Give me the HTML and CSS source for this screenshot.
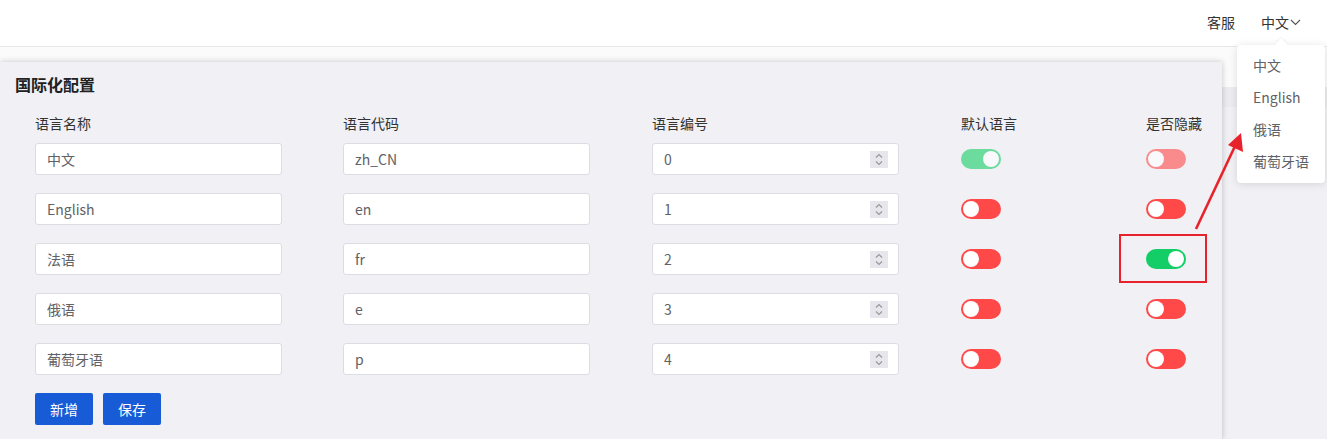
FILE: index.html
```html
<!DOCTYPE html>
<html lang="zh-CN">

<head>
    <meta charset="UTF-8">
    <meta name="viewport" content="width=device-width, initial-scale=1.0">
    <title>国际化配置</title>
    <link rel="stylesheet" href="styles.css">
</head>

<body>
    <div class="header">
        <span class="header_item">客服</span>
        <span class="header_item lang">中文
            <svg class="chevron" width="11" height="7" viewBox="0 0 11 7">
                <path d="M1 1 L5.5 5.5 L10 1" fill="none" stroke="#555" stroke-width="1.1" />
            </svg>
        </span>
    </div>

    <div class="main">
        <div class="panel">
            <div class="panel_title">国际化配置</div>
            <div class="grid grid_head">
                <div>语言名称</div>
                <div>语言代码</div>
                <div>语言编号</div>
                <div>默认语言</div>
                <div>是否隐藏</div>
            </div>
            <div class="grid">
                <div class="input"><input value="中文"></div>
                <div class="input"><input value="zh_CN"></div>
                <div class="input"><input value="0"><span class="spin"></span></div>
                <div class="cell"><span class="switch on disabled"></span></div>
                <div class="cell"><span class="switch disabled"></span></div>

                <div class="input"><input value="English"></div>
                <div class="input"><input value="en"></div>
                <div class="input"><input value="1"><span class="spin"></span></div>
                <div class="cell"><span class="switch"></span></div>
                <div class="cell"><span class="switch"></span></div>

                <div class="input"><input value="法语"></div>
                <div class="input"><input value="fr"></div>
                <div class="input"><input value="2"><span class="spin"></span></div>
                <div class="cell"><span class="switch"></span></div>
                <div class="cell"><span class="switch on"></span></div>

                <div class="input"><input value="俄语"></div>
                <div class="input"><input value="e"></div>
                <div class="input"><input value="3"><span class="spin"></span></div>
                <div class="cell"><span class="switch"></span></div>
                <div class="cell"><span class="switch"></span></div>

                <div class="input"><input value="葡萄牙语"></div>
                <div class="input"><input value="p"></div>
                <div class="input"><input value="4"><span class="spin"></span></div>
                <div class="cell"><span class="switch"></span></div>
                <div class="cell"><span class="switch"></span></div>
            </div>
            <div class="btns">
                <button class="btn">新增</button>
                <button class="btn">保存</button>
            </div>
        </div>
    </div>

    <ul class="dropdown">
        <li>中文</li>
        <li>English</li>
        <li>俄语</li>
        <li>葡萄牙语</li>
    </ul>

    <svg class="mark" width="1327" height="439" viewBox="0 0 1327 439">
        <rect x="1120" y="235" width="86" height="47" fill="none" stroke="#e8222b" stroke-width="2" />
        <line x1="1196" y1="229" x2="1236" y2="144" stroke="#e8222b" stroke-width="2.6" />
        <polygon points="1241,133 1243,152 1228,145" fill="#e8222b" />
    </svg>
</body>

</html>
```

FILE: styles.css
```css
* {
    padding: 0;
    margin: 0;
    box-sizing: border-box;
}

ul,
li {
    list-style: none;
}

body {
    width: 1327px;
    height: 439px;
    overflow: hidden;
    position: relative;
    font-family: "Noto Sans CJK SC", "Microsoft YaHei", sans-serif;
    font-size: 14px;
    color: #333;
    background: #f0f0f5;
}

.header {
    height: 47px;
    background: #fff;
    border-bottom: 1px solid #e8e8ec;
    display: flex;
    justify-content: flex-end;
    align-items: center;
    padding: 0 26px 2px 0;
    gap: 26px;
}

.header_item {
    line-height: 20px;
    color: #333;
    display: flex;
    align-items: center;
}

.chevron {
    margin-left: 1px;
    margin-top: 1px;
}

.main {
    padding-top: 15px;
    height: 392px;
    background: linear-gradient(to bottom, #fbfbfc 0, #fbfbfc 40px, #ebebf0 40px, #ebebf0 60px, #f0f0f5 60px);
}

.panel {
    width: 1222px;
    height: 100%;
    background: #f0f0f5;
    box-shadow: 0 0 6px rgba(0, 0, 0, 0.22);
    padding: 11px 0 0 15px;
}

.panel_title {
    font-size: 16px;
    font-weight: bold;
    line-height: 22px;
    color: #222;
}

.grid {
    display: grid;
    grid-template-columns: 308px 309px 309px 185px 1fr;
    row-gap: 18px;
    padding-left: 20px;
}

.grid_head {
    margin-top: 18px;
    margin-bottom: 10px;
    line-height: 20px;
    color: #333;
}

.input {
    width: 247px;
    height: 32px;
    background: #fff;
    border: 1px solid #dcdce4;
    border-radius: 3px;
    display: flex;
    align-items: center;
    padding: 0 10px 0 11px;
}

.input input {
    flex: 1;
    min-width: 0;
    border: none;
    outline: none;
    background: transparent;
    font-family: inherit;
    font-size: 14px;
    color: #606266;
}

.spin {
    width: 18px;
    height: 17px;
    background: #e6e6ec url("data:image/svg+xml,%3Csvg xmlns='http://www.w3.org/2000/svg' width='18' height='17'%3E%3Cpath d='M6 6.5 L9 3.5 L12 6.5 M6 10.5 L9 13.5 L12 10.5' fill='none' stroke='%23999' stroke-width='1.2'/%3E%3C/svg%3E") no-repeat center;
}

.cell {
    height: 32px;
    display: flex;
    align-items: center;
}

.switch {
    width: 40px;
    height: 20px;
    border-radius: 10px;
    background: #ff4949;
    position: relative;
    display: block;
}

.switch:after {
    content: '';
    position: absolute;
    top: 2px;
    left: 2px;
    width: 16px;
    height: 16px;
    border-radius: 50%;
    background: #fff;
}

.switch.on {
    background: #13ce66;
}

.switch.on:after {
    left: 22px;
}

.switch.disabled {
    opacity: 0.6;
}

.btns {
    display: flex;
    gap: 10px;
    padding-left: 20px;
    margin-top: 18px;
}

.btn {
    width: 58px;
    height: 32px;
    border: none;
    border-radius: 2px;
    background: #175bd6;
    color: #fff;
    font-family: inherit;
    font-size: 14px;
}

.dropdown {
    position: absolute;
    left: 1237px;
    top: 45px;
    width: 88px;
    padding: 4px 0 6px;
    background: #fff;
    border-radius: 4px;
    box-shadow: 0 1px 8px rgba(0, 0, 0, 0.12);
}

.dropdown:before {
    content: '';
    position: absolute;
    top: -5px;
    left: 40px;
    width: 8px;
    height: 8px;
    background: #fff;
    transform: rotate(45deg);
    box-shadow: -1px -1px 2px rgba(0, 0, 0, 0.05);
}

.dropdown li {
    line-height: 32px;
    padding-left: 16px;
    color: #606266;
}

.mark {
    position: absolute;
    left: 0;
    top: 0;
    pointer-events: none;
}
```
